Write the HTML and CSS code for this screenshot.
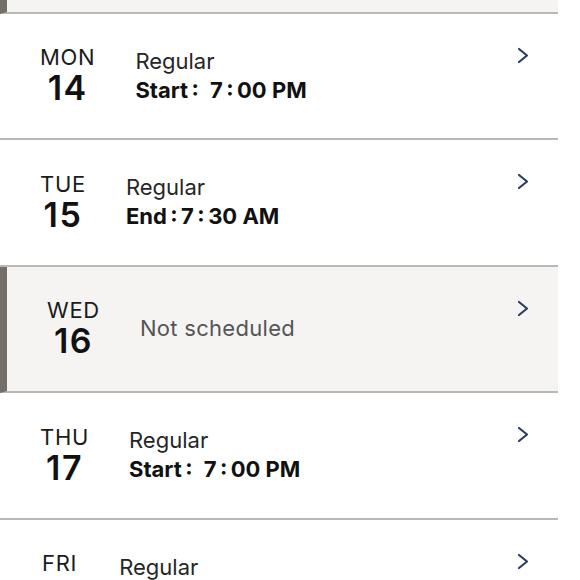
FILE: index.html
```html
<!DOCTYPE html>
<html lang="en">
<head>
    <meta charset="UTF-8">
    <meta name="viewport" content="width=device-width, initial-scale=1.0">
    <title>Schedule</title>
    <link rel="stylesheet" href="styles.css">
</head>
<body>
    <div class="schedule">
        <!-- bottom edge of the previous (scrolled away) day -->
        <div class="day-row off tail"></div>
        <div class="day-row">
            <div class="date"><span class="dow">MON</span><span class="num">14</span></div>
            <div class="info">
                <span class="type">Regular</span>
                <span class="time">Start&thinsp;:&ensp;7&thinsp;:&thinsp;00 PM</span>
            </div>
            <svg class="chev" viewBox="0 0 12 17"><path d="M2 2 L10 8.5 L2 15"/></svg>
        </div>
        <div class="day-row">
            <div class="date"><span class="dow">TUE</span><span class="num">15</span></div>
            <div class="info">
                <span class="type">Regular</span>
                <span class="time">End&thinsp;:&thinsp;7&thinsp;:&thinsp;30 AM</span>
            </div>
            <svg class="chev" viewBox="0 0 12 17"><path d="M2 2 L10 8.5 L2 15"/></svg>
        </div>
        <div class="day-row off">
            <div class="date"><span class="dow">WED</span><span class="num">16</span></div>
            <div class="info"><span class="empty">Not scheduled</span></div>
            <svg class="chev" viewBox="0 0 12 17"><path d="M2 2 L10 8.5 L2 15"/></svg>
        </div>
        <div class="day-row">
            <div class="date"><span class="dow">THU</span><span class="num">17</span></div>
            <div class="info">
                <span class="type">Regular</span>
                <span class="time">Start&thinsp;:&ensp;7&thinsp;:&thinsp;00 PM</span>
            </div>
            <svg class="chev" viewBox="0 0 12 17"><path d="M2 2 L10 8.5 L2 15"/></svg>
        </div>
        <div class="day-row">
            <div class="date"><span class="dow">FRI</span><span class="num">18</span></div>
            <div class="info">
                <span class="type">Regular</span>
                <span class="time">End&thinsp;:&thinsp;7&thinsp;:&thinsp;30 AM</span>
            </div>
            <svg class="chev" viewBox="0 0 12 17"><path d="M2 2 L10 8.5 L2 15"/></svg>
        </div>
    </div>
</body>
</html>
```

FILE: styles.css
```css
body {
    margin: 0;
    background: #fff;
    font-family: Inter, "Noto Sans", sans-serif;
    color: #1b1b1b;
    overflow: hidden;
}
.schedule {
    width: 558px;
}
.day-row {
    display: flex;
    align-items: center;
    gap: 40px;
    box-sizing: border-box;
    height: 126.5px;
    padding: 0 29px 0 40px;
    border-bottom: 2px solid #bab8b5;
    background: #fff;
}
.day-row.off {
    background: #f6f4f3;
    border-left: 7px solid #736e69;
}
.day-row.tail {
    height: 13.5px;
}
.date {
    display: flex;
    flex-direction: column;
    align-items: center;
}
.dow {
    font-size: 22px;
    line-height: 25px;
    letter-spacing: 0.7px;
}
.num {
    font-size: 34px;
    line-height: 36px;
    font-weight: 600;
    letter-spacing: 1.5px;
    color: #111;
}
.info {
    display: flex;
    flex-direction: column;
    flex: 1;
}
.type {
    font-size: 22px;
    line-height: 29px;
    color: #262626;
}
.time {
    font-size: 22px;
    line-height: 29px;
    font-weight: 700;
    color: #111;
}
.empty {
    font-size: 22px;
    line-height: 29px;
    letter-spacing: 0.3px;
    color: #555;
}
.chev {
    align-self: flex-start;
    margin-top: 33px;
    width: 12px;
    height: 17px;
    fill: none;
    stroke: #2c3d5c;
    stroke-width: 2.2;
    stroke-linecap: round;
    stroke-linejoin: round;
}
```
